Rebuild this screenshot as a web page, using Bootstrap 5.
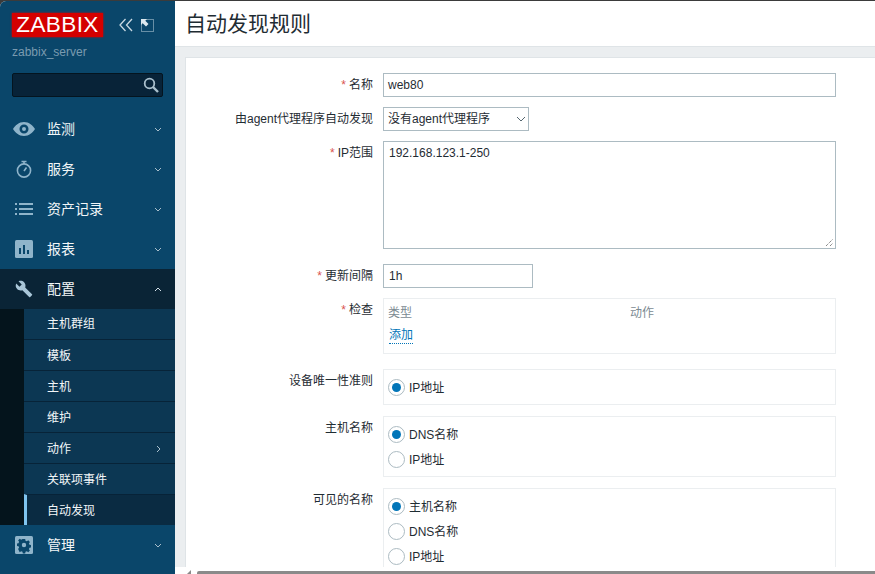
<!DOCTYPE html>
<html lang="zh">
<head>
  <meta charset="UTF-8">
  <title>自动发现规则</title>
  <link href="https://cdn.jsdelivr.net/npm/bootstrap@5.3.0/dist/css/bootstrap.min.css" rel="stylesheet">
  <style>
    html, body { height: 574px; overflow: hidden; }
    body { background: #3b3b3b; font: 12px/16px "Liberation Sans", "Noto Sans CJK SC", sans-serif; color: #1f2c33; }
    .frame { height: 573px; margin-top: 1px; overflow: hidden; border-top-left-radius: 6px; background: #fff; }
    .side { width: 175px; background: #0a466a; flex: none; height: 573px; }
    .side-top { height: 108px; padding: 12px 12px 0; }
    .logo { width: 91px; height: 24px; background: #d40000; color: #fff; font-size: 22.500px; line-height: 24px; letter-spacing: .4px; text-align: center; box-shadow: 0 0 2px #d40000; }
    .server { color: #7a9bb0; margin-top: 7px; line-height: 16px; }
    .search-box { height: 24px; width: 151px; margin-top: 13px; background: #082338; border: 1px solid #04141f; border-radius: 2px; padding-right: 3px; }
    .menu-row { height: 40px; padding: 0 13px 0 15px; color: #f2f6f8; font-size: 14px; }
    .menu-row svg.ico { width: 18px; height: 18px; margin-right: 14px; flex: none; }
    .menu-row svg.eye { width: 22px; margin-left: -2px; margin-right: 12px; }
    .menu-open { background: #0a2436; }
    .sub-wrap { background: #04141c; padding-left: 24px; }
    .sub-row { height: 31px; padding: 1px 14px 0 23px; background: #0c3753; border-top: 1px solid #072338; color: #f2f6f8; }
    .sub-row:first-child { border-top: 0; height: 30px; padding-top: 0; }
    .sub-on { background: #0a2b42; border-left: 3px solid #7fc4ee; padding-left: 20px; }
    .main-col { min-width: 0; background: #ebeef0; }
    .head-bar { height: 46px; background: #fff; border-bottom: 1px solid #dfe4e7; padding: 9px 0 0 10px; }
    .head-bar h1 { font-size: 21px; line-height: 28px; margin: 0; font-weight: 400; color: #1f2c33; }
    .form-sheet { margin: 10px 0 0 10px; background: #fff; border: 1px solid #dfe4e7; border-right: 0; padding-top: 15px; height: 560px; }
    .f-row { margin-bottom: 10px; }
    .f-row-wide { margin-bottom: 11px; }
    .f-label { width: 187px; flex: none; text-align: right; margin-right: 10px; padding-top: 4px; }
    .req { color: #d9534f; margin-right: 3px; }
    .z-input { height: 24px; border: 1px solid #acbbc2; padding: 0 5px 0 4px; color: #1f2c33; background: #fff; line-height: 22px; }
    .w-full { width: 453px; }
    .z-select { width: 146px; padding-right: 2px; }
    .z-area { width: 453px; height: 108px; padding: 0 5px; position: relative; }
    .z-area svg { position: absolute; right: 1px; bottom: 1px; }
    .z-short { width: 150px; padding-left: 5px; }
    .z-box { width: 453px; border: 1px solid #ebeef0; padding: 6px 4px 9px; }
    .z-box-radio { padding: 5px 4px 4px; }
    .gap-big { margin-bottom: 15px; }
    .grey-txt { color: #7b8a92; }
    .col-type { width: 242px; }
    .add-link { color: #0275b8; border-bottom: 1px dotted #0275b8; display: inline-block; line-height: 15px; margin: 7px 0 0 1px; }
    .radio-row { height: 25px; }
    .radio-dot { width: 17px; height: 17px; border: 1px solid #acbbc2; border-radius: 50%; margin-right: 4px; flex: none; background: #fff; display: flex; align-items: center; justify-content: center; }
    .radio-dot.on::after { content: ""; width: 9px; height: 9px; border-radius: 50%; background: #0275b8; }
    .scroll-strip { position: absolute; left: 175px; right: 0; bottom: 0; height: 7px; background: #fff; }
    .scroll-thumb { position: absolute; left: 22px; right: 0; bottom: 0; height: 3px; background: #8a8a8a; border-top-left-radius: 2px; }
    .scroll-tick { position: absolute; left: 12px; bottom: 0; }
  </style>
</head>
<body>
<div class="frame d-flex">
  <div class="side">
    <div class="side-top">
      <div class="d-flex align-items-center">
        <div class="logo">ZABBIX</div>
        <svg class="ms-3" width="14" height="14" viewBox="0 0 14 14" fill="none" stroke="#c7d8e2" stroke-width="1.300"><path d="M6.500 1 1 7l5.500 6M13 1 7.500 7l5.500 6"/></svg>
        <svg class="ms-2" width="13" height="13" viewBox="0 0 13 13" fill="none"><rect x=".5" y=".5" width="12" height="12" stroke="#c7d8e2" stroke-dasharray="1 1"/><path d="M0 0h6L4.300 1.700 7.500 5 5 7.500 1.700 4.300 0 6z" fill="#dce8ef"/></svg>
      </div>
      <div class="server">zabbix_server</div>
      <div class="search-box d-flex align-items-center justify-content-end">
        <svg width="16" height="16" viewBox="0 0 16 16" fill="none" stroke="#a9bfcc" stroke-width="1.800"><circle cx="6.500" cy="6.500" r="4.800"/><path d="m10 10 5 5" stroke-width="2.400"/></svg>
      </div>
    </div>
    <div class="menu-row d-flex align-items-center">
      <svg class="ico eye" viewBox="0 0 22 18" fill="#8fb4ca"><path fill-rule="evenodd" d="M11 2C6 2 2 5.500 0 9c2 3.500 6 7 11 7s9-3.500 11-7c-2-3.500-6-7-11-7zm0 2.500a4.500 4.500 0 1 1 0 9 4.500 4.500 0 0 1 0-9zM11 7a2 2 0 1 0 0 4 2 2 0 0 0 0-4z"/></svg>
      <span class="flex-grow-1">监测</span>
      <svg width="8" height="5" viewBox="0 0 8 5" fill="none" stroke="#a9bfcc"><path d="m1 1 3 3 3-3"/></svg>
    </div>
    <div class="menu-row d-flex align-items-center">
      <svg class="ico" viewBox="0 0 18 18" fill="none" stroke="#8fb4ca" stroke-width="1.600"><circle cx="9" cy="10.500" r="6.600"/><path d="M6.500 1.500h5M9 2v2M9 11l2.500-3.500"/></svg>
      <span class="flex-grow-1">服务</span>
      <svg width="8" height="5" viewBox="0 0 8 5" fill="none" stroke="#a9bfcc"><path d="m1 1 3 3 3-3"/></svg>
    </div>
    <div class="menu-row d-flex align-items-center">
      <svg class="ico" viewBox="0 0 18 18" fill="#8fb4ca"><path d="M0 3h2v2H0zM4 3h14v2H4zM0 8h2v2H0zM4 8h14v2H4zM0 13h2v2H0zM4 13h14v2H4z"/></svg>
      <span class="flex-grow-1">资产记录</span>
      <svg width="8" height="5" viewBox="0 0 8 5" fill="none" stroke="#a9bfcc"><path d="m1 1 3 3 3-3"/></svg>
    </div>
    <div class="menu-row d-flex align-items-center">
      <svg class="ico" viewBox="0 0 18 18"><rect width="18" height="18" rx="1.500" fill="#8fb4ca"/><path d="M4 8h2v6H4zM8 5h2v9H8zM12 10h2v4h-2z" fill="#0a466a"/></svg>
      <span class="flex-grow-1">报表</span>
      <svg width="8" height="5" viewBox="0 0 8 5" fill="none" stroke="#a9bfcc"><path d="m1 1 3 3 3-3"/></svg>
    </div>
    <div class="menu-row menu-open d-flex align-items-center">
      <svg class="ico" viewBox="0 0 24 24" fill="#a9c6d8"><path d="M22.700 19l-9.100-9.100c.9-2.300.4-5-1.500-6.900-2-2-5-2.400-7.400-1.300L9 6 6 9 1.600 4.700C.4 7.100.9 10.100 2.900 12.100c1.900 1.900 4.600 2.400 6.900 1.500l9.100 9.100c.4.400 1 .4 1.400 0l2.300-2.300c.5-.4.5-1.100.1-1.400z"/></svg>
      <span class="flex-grow-1">配置</span>
      <svg width="8" height="5" viewBox="0 0 8 5" fill="none" stroke="#d5e2ea"><path d="m1 4 3-3 3 3"/></svg>
    </div>
    <div class="sub-wrap">
      <div class="sub-row d-flex align-items-center">主机群组</div>
      <div class="sub-row d-flex align-items-center">模板</div>
      <div class="sub-row d-flex align-items-center">主机</div>
      <div class="sub-row d-flex align-items-center">维护</div>
      <div class="sub-row d-flex align-items-center"><span class="flex-grow-1">动作</span><svg width="5" height="8" viewBox="0 0 5 8" fill="none" stroke="#a9bfcc"><path d="m1 1 3 3-3 3"/></svg></div>
      <div class="sub-row d-flex align-items-center">关联项事件</div>
      <div class="sub-row sub-on d-flex align-items-center">自动发现</div>
    </div>
    <div class="menu-row d-flex align-items-center">
      <svg class="ico" viewBox="0 0 18 18"><rect width="18" height="18" rx="1.500" fill="#8fb4ca"/><path fill="#0a466a" fill-rule="evenodd" d="m7.800 3h2.400l.3 1.700 1.300.6 1.500-1 1.600 1.700-1 1.400.6 1.400 1.500.3v2.400l-1.500.3-.6 1.400 1 1.400-1.600 1.600-1.500-1-1.300.6-.3 1.600H7.800l-.3-1.600-1.300-.6-1.500 1L3.100 13l1-1.400-.6-1.400-1.500-.3V7.500l1.500-.3.6-1.400-1-1.400 1.600-1.700 1.500 1 1.300-.6zM9 6.800a2.200 2.200 0 1 0 0 4.400 2.200 2.200 0 0 0 0-4.400z"/></svg>
      <span class="flex-grow-1">管理</span>
      <svg width="8" height="5" viewBox="0 0 8 5" fill="none" stroke="#a9bfcc"><path d="m1 1 3 3 3-3"/></svg>
    </div>
  </div>
  <div class="main-col flex-grow-1">
    <div class="head-bar"><h1>自动发现规则</h1></div>
    <div class="form-sheet">
      <div class="f-row d-flex">
        <div class="f-label"><span class="req">*</span>名称</div>
        <div class="z-input w-full">web80</div>
      </div>
      <div class="f-row d-flex">
        <div class="f-label">由agent代理程序自动发现</div>
        <div class="z-input z-select d-flex align-items-center justify-content-between">
          <span>没有agent代理程序</span>
          <svg width="10" height="6" viewBox="0 0 10 6" fill="none" stroke="#55666f"><path d="m1 1 4 4 4-4"/></svg>
        </div>
      </div>
      <div class="f-row gap-big d-flex">
        <div class="f-label"><span class="req">*</span>IP范围</div>
        <div class="z-input z-area">192.168.123.1-250
          <svg width="9" height="9" viewBox="0 0 9 9" fill="none" stroke="#555" stroke-dasharray="1 1"><path d="M1 8 8 1M5 8l3-3"/></svg>
        </div>
      </div>
      <div class="f-row d-flex">
        <div class="f-label"><span class="req">*</span>更新间隔</div>
        <div class="z-input z-short">1h</div>
      </div>
      <div class="f-row gap-big d-flex">
        <div class="f-label"><span class="req">*</span>检查</div>
        <div class="z-box">
          <div class="d-flex grey-txt"><span class="col-type">类型</span><span>动作</span></div>
          <span class="add-link">添加</span>
        </div>
      </div>
      <div class="f-row-wide d-flex">
        <div class="f-label">设备唯一性准则</div>
        <div class="z-box z-box-radio">
          <div class="radio-row d-flex align-items-center"><span class="radio-dot on"></span>IP地址</div>
        </div>
      </div>
      <div class="f-row-wide d-flex">
        <div class="f-label">主机名称</div>
        <div class="z-box z-box-radio">
          <div class="radio-row d-flex align-items-center"><span class="radio-dot on"></span>DNS名称</div>
          <div class="radio-row d-flex align-items-center"><span class="radio-dot"></span>IP地址</div>
        </div>
      </div>
      <div class="f-row-wide d-flex">
        <div class="f-label">可见的名称</div>
        <div class="z-box z-box-radio">
          <div class="radio-row d-flex align-items-center"><span class="radio-dot on"></span>主机名称</div>
          <div class="radio-row d-flex align-items-center"><span class="radio-dot"></span>DNS名称</div>
          <div class="radio-row d-flex align-items-center"><span class="radio-dot"></span>IP地址</div>
        </div>
      </div>
    </div>
  </div>
</div>
<div class="scroll-strip">
  <svg class="scroll-tick" width="4" height="4" viewBox="0 0 4 4" fill="#8a8a8a"><path d="M4 0v4H0z"/></svg>
  <div class="scroll-thumb"></div>
</div>
<script src="https://cdn.jsdelivr.net/npm/bootstrap@5.3.0/dist/js/bootstrap.bundle.min.js"></script>
</body>
</html>
